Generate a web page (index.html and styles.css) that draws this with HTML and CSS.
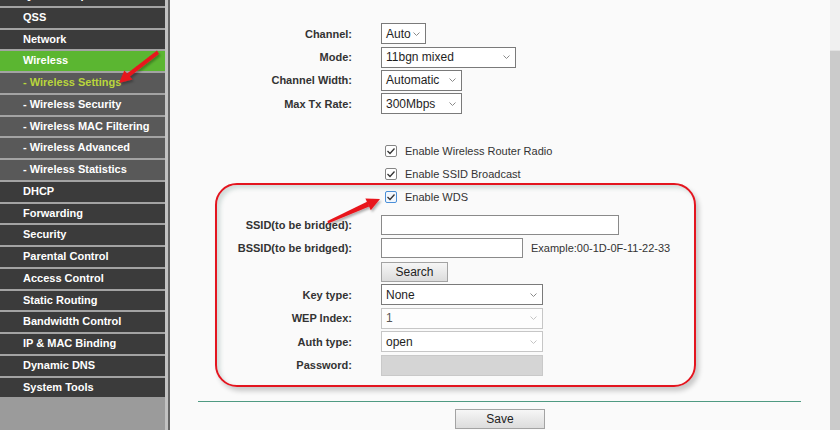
FILE: index.html
```html
<!DOCTYPE html>
<html lang="en">
<head>
<meta charset="utf-8">
<title>Wireless Settings</title>
<link rel="stylesheet" href="styles.css">
</head>
<body>
<div class="page">
  <nav class="sidebar">
    <ul class="menu">
      <li class="item">Quick Setup</li>
      <li class="item">QSS</li>
      <li class="item">Network</li>
      <li class="item active">Wireless</li>
      <li class="item sub current">- Wireless Settings</li>
      <li class="item sub">- Wireless Security</li>
      <li class="item sub">- Wireless MAC Filtering</li>
      <li class="item sub">- Wireless Advanced</li>
      <li class="item sub">- Wireless Statistics</li>
      <li class="item">DHCP</li>
      <li class="item">Forwarding</li>
      <li class="item">Security</li>
      <li class="item">Parental Control</li>
      <li class="item">Access Control</li>
      <li class="item">Static Routing</li>
      <li class="item">Bandwidth Control</li>
      <li class="item">IP &amp; MAC Binding</li>
      <li class="item">Dynamic DNS</li>
      <li class="item">System Tools</li>
    </ul>
  </nav>
  <div class="divider"></div>
  <main class="main">
    <div class="form">
      <div class="label">Channel:</div>
      <div class="select w-45"><span>Auto</span><svg class="chev" width="7" height="4" viewBox="0 0 7 4"><polyline points="0.5,0.5 3.5,3.5 6.5,0.5" fill="none" stroke="#8a8a8a" stroke-width="1"/></svg></div>
      <div class="label">Mode:</div>
      <div class="select w-135"><span>11bgn mixed</span><svg class="chev" width="7" height="4" viewBox="0 0 7 4"><polyline points="0.5,0.5 3.5,3.5 6.5,0.5" fill="none" stroke="#8a8a8a" stroke-width="1"/></svg></div>
      <div class="label">Channel Width:</div>
      <div class="select w-81"><span>Automatic</span><svg class="chev" width="7" height="4" viewBox="0 0 7 4"><polyline points="0.5,0.5 3.5,3.5 6.5,0.5" fill="none" stroke="#8a8a8a" stroke-width="1"/></svg></div>
      <div class="label">Max Tx Rate:</div>
      <div class="select w-81"><span>300Mbps</span><svg class="chev" width="7" height="4" viewBox="0 0 7 4"><polyline points="0.5,0.5 3.5,3.5 6.5,0.5" fill="none" stroke="#8a8a8a" stroke-width="1"/></svg></div>
      <div class="spacer"></div>
      <div class="label"></div>
      <label class="check"><svg class="box" width="12" height="12" viewBox="0 0 12 12"><rect x="0.5" y="0.5" width="11" height="11" rx="1.5" fill="#fff" stroke="#858585"/><polyline points="2.5,6 5,8.5 9.5,3.5" fill="none" stroke="#333" stroke-width="1.3"/></svg><span>Enable Wireless Router Radio</span></label>
      <div class="label"></div>
      <label class="check"><svg class="box" width="12" height="12" viewBox="0 0 12 12"><rect x="0.5" y="0.5" width="11" height="11" rx="1.5" fill="#fff" stroke="#858585"/><polyline points="2.5,6 5,8.5 9.5,3.5" fill="none" stroke="#333" stroke-width="1.3"/></svg><span>Enable SSID Broadcast</span></label>
      <div class="label"></div>
      <label class="check"><svg class="box" width="12" height="12" viewBox="0 0 12 12"><rect x="0.5" y="0.5" width="11" height="11" rx="1.5" fill="#f2f7fd" stroke="#4a8fd8"/><polyline points="2.5,6 5,8.5 9.5,3.5" fill="none" stroke="#333" stroke-width="1.3"/></svg><span>Enable WDS</span></label>
    </div>
    <div class="form wds">
      <div class="label">SSID(to be bridged):</div>
      <div class="input w-238"></div>
      <div class="label">BSSID(to be bridged):</div>
      <div class="field-line"><div class="input w-142"></div><span class="hint">Example:00-1D-0F-11-22-33</span></div>
      <div class="label"></div>
      <div><button class="btn search" type="button">Search</button></div>
      <div class="label">Key type:</div>
      <div class="select w-162"><span>None</span><svg class="chev" width="7" height="4" viewBox="0 0 7 4"><polyline points="0.5,0.5 3.5,3.5 6.5,0.5" fill="none" stroke="#8a8a8a" stroke-width="1"/></svg></div>
      <div class="label">WEP Index:</div>
      <div class="select w-162 disabled"><span>1</span><svg class="chev" width="7" height="4" viewBox="0 0 7 4"><polyline points="0.5,0.5 3.5,3.5 6.5,0.5" fill="none" stroke="#c4c4c4" stroke-width="1"/></svg></div>
      <div class="label">Auth type:</div>
      <div class="select w-162 soft"><span>open</span><svg class="chev" width="7" height="4" viewBox="0 0 7 4"><polyline points="0.5,0.5 3.5,3.5 6.5,0.5" fill="none" stroke="#c4c4c4" stroke-width="1"/></svg></div>
      <div class="label">Password:</div>
      <div class="input w-162 locked"></div>
    </div>
    <hr class="rule">
    <div class="actions"><button class="btn save" type="button">Save</button></div>
  </main>
  <div class="scrollbar"><div class="track"></div><div class="thumb"></div></div>
  <div class="callout"></div>
  <svg class="arrows" width="840" height="430" viewBox="0 0 840 430">
    <defs>
      <filter id="sh" x="-20%" y="-20%" width="140%" height="140%">
        <feDropShadow dx="1.5" dy="2" stdDeviation="1.2" flood-color="#000" flood-opacity="0.3"/>
      </filter>
    </defs>
    <g filter="url(#sh)" fill="#e8161e">
      <polygon points="157,50.5 159,54 128.6,77.6 127.4,73.2"/>
      <polygon points="119,83 132.5,79.5 124.3,70.5"/>
      <polygon points="328,223.5 327.5,221 367.5,201.6 369.2,206.6"/>
      <polygon points="380,199 370.8,210.2 365.4,198.6"/>
    </g>
  </svg>
</div>
</body>
</html>
```
FILE: styles.css
```css
* { box-sizing: border-box; }
html, body { margin: 0; padding: 0; }
body {
  font-family: "Liberation Sans", Arial, sans-serif;
  background: #fafafa;
}
.page {
  position: relative;
  display: flex;
  width: 840px;
  height: 430px;
  overflow: hidden;
}
.sidebar {
  width: 165px;
  flex: 0 0 165px;
  background: #9b9b9b;
  overflow: hidden;
}
.menu {
  list-style: none;
  margin: -15.8px 0 0 0;
  padding: 0;
}
.item {
  border-top: 2px solid #a3a3a3;
  height: 21.76px;
  line-height: 19.76px;
  padding-left: 23px;
  background: #3b3b3b;
  color: #fff;
  font-weight: bold;
  font-size: 11px;
  white-space: nowrap;
}
.item.active { background: #5bb631; }
.item.sub { background: #595959; }
.item.current { color: #b9d63c; }
.divider {
  flex: 0 0 5px;
  border-left: 3px solid #c2c2c2;
  border-right: 2px solid #646464;
}
.main {
  flex: 1 1 auto;
  background: #fafafa;
  padding-top: 22px;
}
.form {
  display: grid;
  grid-template-columns: 182px 1fr;
  column-gap: 29px;
  grid-auto-rows: 23.4px;
  align-items: center;
}
.form.wds { margin-top: 4px; }
.spacer { grid-column: 1 / 3; }
.label {
  text-align: right;
  font-weight: bold;
  font-size: 11px;
  color: #333;
  white-space: nowrap;
}
.select {
  display: flex;
  align-items: center;
  justify-content: space-between;
  height: 21px;
  border: 1px solid #7a7a7a;
  background: #fff;
  padding: 0 5px 0 4px;
  font-size: 12px;
  color: #1e1e1e;
}
.select.disabled { border-color: #c6c6c6; color: #555; background: #fdfdfd; }
.select.soft { border-color: #c6c6c6; }
.chev { flex: 0 0 7px; }
.w-45 { width: 45px; }
.w-81 { width: 81px; }
.w-135 { width: 135px; }
.w-142 { width: 142px; }
.w-162 { width: 162px; }
.w-238 { width: 238px; }
.check {
  display: flex;
  align-items: center;
  gap: 8px;
  margin-left: 4px;
  font-size: 11px;
  color: #333;
}
.box { flex: 0 0 12px; display: block; }
.input {
  height: 20px;
  border: 1px solid #8a8a8a;
  background: #fff;
}
.input.locked { background: #d5d5d5; border-color: #c9c9c9; height: 21px; }
.field-line { display: flex; align-items: center; gap: 8px; }
.hint { font-size: 11px; color: #333; white-space: nowrap; }
.btn {
  display: block;
  height: 20px;
  border: 1px solid #a3a3a3;
  background: linear-gradient(#f6f6f6, #dcdcdc);
  font-family: "Liberation Sans", Arial, sans-serif;
  font-size: 12px;
  color: #222;
  padding: 0;
}
.btn.search { width: 67px; }
.btn.save { width: 90px; margin: 0 auto; }
.rule {
  margin: 24px 29px 7px 28px;
  border: 0;
  border-top: 1px solid #4f9a82;
  height: 0;
}
.actions { display: block; }
.scrollbar {
  flex: 0 0 10px;
  display: flex;
  flex-direction: column;
}
.track { height: 50px; background: #f0f0f0; }
.thumb { flex: 1; background: #cbcbcb; border-top: 1px solid #e2e2e2; }
.callout {
  position: absolute;
  left: 215px;
  top: 183px;
  width: 481px;
  height: 204px;
  border: 2px solid #e3151f;
  border-radius: 22px;
  box-shadow: 3px 4px 5px rgba(0, 0, 0, 0.2), inset 3px 3px 4px rgba(60, 110, 100, 0.22);
  pointer-events: none;
}
.arrows {
  position: absolute;
  left: 0;
  top: 0;
  pointer-events: none;
}
```
